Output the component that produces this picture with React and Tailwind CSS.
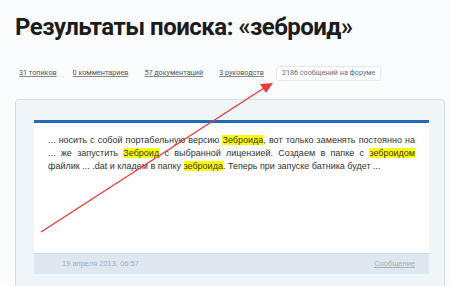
import React from 'react';

const tabs = ['31 топиков', '0 комментариев', '57 документаций', '3 руководств'];

function Hl({ children }) {
  return <span className="bg-[#ffff00]">{children}</span>;
}

export default function App() {
  return (
    <div className="relative w-[450px] h-[286px] overflow-hidden bg-[#fbfcfd] font-['Roboto',sans-serif]">
      <h1 className="pl-[15px] pt-[9px] text-[24px] leading-[36px] font-bold text-[#1c1c1c] tracking-[-0.5px]">
        Результаты поиска: «зеброид»
      </h1>

      <div className="flex items-center mt-[21px] pl-[19px] gap-[16px] text-[7.2px] text-[#555]">
        {tabs.map((t) => (
          <a key={t} href="#" className="underline decoration-[#888] underline-offset-[1px]">
            {t}
          </a>
        ))}
        <span className="ml-[-4px] px-[5px] h-[15px] flex items-center border border-[#e1e8ef] rounded-[3px] bg-white text-[#5f6f80]">
          2186 сообщений на форуме
        </span>
      </div>

      <div className="ml-[15px] mr-[5px] mt-[18px] h-[200px] border border-[#d6dee7] rounded-[4px] bg-[#f0f5fa] pt-[20px] px-[18px]">
        <div className="bg-white border-t-[3px] border-[#1f6cb4] mr-[-3px]">
          <div className="px-[14px] pt-[11px] h-[130px] text-[9px] leading-[13px] text-[#333] text-justify font-['Liberation_Sans',sans-serif]">
            ... носить с собой портабельную версию <Hl>Зеброида</Hl>, вот только заменять постоянно на ... же
            запустить <Hl>Зеброид</Hl> с выбранной лицензией. Создаем в папке с <Hl>зеброидом</Hl> файлик ... .dat
            и кладем в папку <Hl>зеброида</Hl>. Теперь при запуске батника будет ...
          </div>
          <div className="flex justify-between items-center h-[21px] bg-[#dfe7f0] border-t border-[#d0dae5] px-[14px] pl-[28px] text-[7.5px] text-[#a3afbd] font-['Liberation_Sans',sans-serif]">
            <span>19 апреля 2013, 06:57</span>
            <a href="#" className="underline">Сообщение</a>
          </div>
        </div>
      </div>

      <svg className="absolute left-0 top-0 pointer-events-none" width="450" height="286">
        <line x1="41" y1="232" x2="264" y2="88" stroke="#ef3a3a" strokeWidth="1.4" />
        <polygon points="273,83 260,84 266,93" fill="#ef3a3a" />
      </svg>
    </div>
  );
}
